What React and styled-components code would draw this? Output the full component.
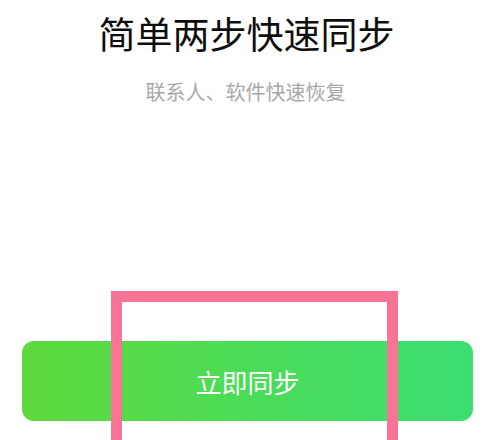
import React from "react";
import styled, { createGlobalStyle } from "styled-components";

const Global = createGlobalStyle`
  html, body { margin: 0; padding: 0; background: #ffffff; }
  body { font-family: "Noto Sans CJK SC", "Noto Sans", sans-serif; }
`;

const Page = styled.div`
  position: relative;
  width: 489px;
  height: 440px;
  overflow: hidden;
  background: #fff;
  display: flex;
  flex-direction: column;
  align-items: center;
  padding-top: 15px;
  box-sizing: border-box;
`;

const Title = styled.h1`
  margin: 0;
  font-size: 37px;
  line-height: 37px;
  font-weight: 400;
  color: #0e0e0e;
  transform: translateX(2px);
`;

const Subtitle = styled.p`
  margin: 30px 0 0;
  font-size: 20px;
  line-height: 20px;
  color: #a8a8a8;
  font-weight: 400;
  transform: translateX(1px);
`;

const Spacer = styled.div`
  flex: 1;
`;

const Button = styled.button`
  width: 451px;
  height: 80px;
  margin-bottom: 19px;
  border: none;
  border-radius: 12px;
  background: linear-gradient(90deg, #5dd93c 0%, #4ddc55 45%, #3cdd71 100%);
  color: #ffffff;
  font-family: "Noto Sans CJK SC", "Noto Sans", sans-serif;
  font-size: 26px;
  font-weight: 400;
  display: flex;
  align-items: center;
  justify-content: center;
  padding: 0;
  transform: translateX(3px);
`;

const Highlight = styled.div`
  position: absolute;
  left: 111px;
  top: 291px;
  width: 287px;
  height: 200px;
  border: 11px solid #f87394;
  border-bottom: none;
  box-sizing: border-box;
  pointer-events: none;
`;

export default function App() {
  return (
    <>
      <Global />
      <Page>
        <Title>简单两步快速同步</Title>
        <Subtitle>联系人、软件快速恢复</Subtitle>
        <Spacer />
        <Button>立即同步</Button>
        <Highlight />
      </Page>
    </>
  );
}
